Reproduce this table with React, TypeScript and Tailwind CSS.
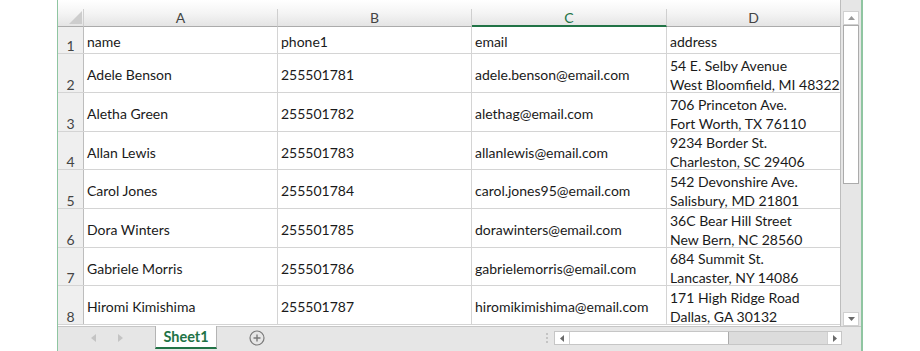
import React from 'react';

const rows = [
  { name: 'Adele Benson', phone: '255501781', email: 'adele.benson@email.com', a1: '54 E. Selby Avenue', a2: 'West Bloomfield, MI 48322', h: 'h-[39px]' },
  { name: 'Aletha Green', phone: '255501782', email: 'alethag@email.com', a1: '706 Princeton Ave.', a2: 'Fort Worth, TX 76110', h: 'h-[39px]' },
  { name: 'Allan Lewis', phone: '255501783', email: 'allanlewis@email.com', a1: '9234 Border St.', a2: 'Charleston, SC 29406', h: 'h-[38px]' },
  { name: 'Carol Jones', phone: '255501784', email: 'carol.jones95@email.com', a1: '542 Devonshire Ave.', a2: 'Salisbury, MD 21801', h: 'h-[39px]' },
  { name: 'Dora Winters', phone: '255501785', email: 'dorawinters@email.com', a1: '36C Bear Hill Street', a2: 'New Bern, NC 28560', h: 'h-[39px]' },
  { name: 'Gabriele Morris', phone: '255501786', email: 'gabrielemorris@email.com', a1: '684 Summit St.', a2: 'Lancaster, NY 14086', h: 'h-[38px]' },
  { name: 'Hiromi Kimishima', phone: '255501787', email: 'hiromikimishima@email.com', a1: '171 High Ridge Road', a2: 'Dallas, GA 30132', h: 'h-[39px]' },
];

const font = "font-['Lato','Open_Sans',sans-serif]";

/* ── Column header cell ─────────────────────────────────── */
const ColHead = ({ label, w, active }: { label: string; w: string; active?: boolean }) => (
  <div
    className={`${w} shrink-0 flex items-center justify-center border-r border-[#cfcfcf] text-[14px] ${
      active ? 'text-[#217346] border-b-2 border-b-[#217346]' : 'text-[#444] border-b border-b-[#ababab]'
    }`}
  >
    {label}
  </div>
);

const Cell = ({ w, children }: { w: string; children: React.ReactNode }) => (
  <div className={`${w} shrink-0 flex items-center pl-[3px] pt-[3px] border-r border-[#d4d4d4] text-[14px] text-[#1a1a1a] overflow-hidden whitespace-nowrap`}>
    {children}
  </div>
);

const RowNum = ({ n }: { n: number }) => (
  <div className="w-[26px] shrink-0 bg-[#efefef] border-r border-[#bdbdbd] flex items-end justify-center text-[14px] leading-[14px] text-[#444]">
    {n}
  </div>
);

export default function App() {
  return (
    <div className={`w-[920px] h-[351px] bg-white flex ${font}`}>
      <div className="w-[57px] shrink-0" />
      {/* ── Excel window ─────────────────────────────── */}
      <div className="w-[806px] h-[351px] flex flex-col border-l border-r-2 border-[#8fc5a1]">
        <div className="flex flex-1 min-h-0">
          {/* grid */}
          <div className="w-[783px] flex flex-col border-r border-[#bdbdbd] overflow-hidden">
            {/* header row */}
            <div className="h-[27px] flex pt-[9px] bg-gradient-to-b from-white via-[#f4f4f4] to-[#e3e3e3]">
              <div className="w-[26px] shrink-0 flex items-end justify-end pr-[1px] pb-[2px] border-r border-[#cfcfcf] border-b border-b-[#ababab]">
                <svg width="13" height="13" viewBox="0 0 13 13">
                  <polygon points="13,0 13,13 0,13" fill="#cdcdcd" />
                </svg>
              </div>
              <ColHead label="A" w="w-[194px]" />
              <ColHead label="B" w="w-[194px]" />
              <ColHead label="C" w="w-[195px]" active />
              <ColHead label="D" w="w-[174px]" />
            </div>
            {/* row 1 */}
            <div className="h-[27px] flex border-b border-[#d4d4d4]">
              <RowNum n={1} />
              <Cell w="w-[194px]">name</Cell>
              <Cell w="w-[194px]">phone1</Cell>
              <Cell w="w-[195px]">email</Cell>
              <Cell w="w-[174px]">address</Cell>
            </div>
            {rows.map((r, i) => (
              <div key={r.name} className={`${r.h} shrink-0 flex border-b border-[#d4d4d4]`}>
                <RowNum n={i + 2} />
                <Cell w="w-[194px]">{r.name}</Cell>
                <Cell w="w-[194px]">{r.phone}</Cell>
                <Cell w="w-[195px]">{r.email}</Cell>
                <div className="w-[174px] shrink-0 flex flex-col justify-center pl-[3px] pt-[3px] text-[14px] leading-[19px] text-[#1a1a1a] whitespace-nowrap overflow-hidden">
                  <span>{r.a1}</span>
                  <span>{r.a2}</span>
                </div>
              </div>
            ))}
          </div>
          {/* vertical scrollbar */}
          <div className="w-[20px] bg-[#e6e6e6] flex flex-col pt-[11px] pl-[2px]">
            <div className="w-[16px] h-[14px] bg-white border border-[#d0d0d0] flex items-center justify-center">
              <svg width="7" height="4" viewBox="0 0 7 4">
                <polygon points="3.5,0 7,4 0,4" fill="#9a9a9a" />
              </svg>
            </div>
            <div className="w-[16px] h-[159px] bg-white border border-[#ababab]" />
            <div className="flex-1" />
            <div className="w-[16px] h-[14px] bg-white border border-[#d0d0d0] flex items-center justify-center">
              <svg width="7" height="4" viewBox="0 0 7 4">
                <polygon points="0,0 7,0 3.5,4" fill="#6a6a6a" />
              </svg>
            </div>
          </div>
        </div>
        {/* ── Sheet tabs bar ─────────────────────────── */}
        <div className="h-[25px] shrink-0 bg-[#e6e6e6] border-t border-[#c6c6c6] flex items-start">
          <div className="w-[97px] flex items-center justify-center gap-[22px] h-[22px]">
            <svg width="5" height="8" viewBox="0 0 5 8">
              <polygon points="5,0 5,8 0,4" fill="#c4c4c4" />
            </svg>
            <svg width="5" height="8" viewBox="0 0 5 8">
              <polygon points="0,0 0,8 5,4" fill="#c4c4c4" />
            </svg>
          </div>
          <div className="w-[62px] h-[23px] -mt-px bg-white border-x border-[#b4b4b4] border-b-2 border-b-[#217346] flex items-center justify-center text-[14.5px] font-bold text-[#217346]">
            Sheet1
          </div>
          <div className="w-[80px] h-[22px] flex items-center justify-center">
            <svg width="16" height="16" viewBox="0 0 16 16">
              <circle cx="8" cy="8" r="7" fill="none" stroke="#7a7a7a" strokeWidth="1.2" />
              <path d="M8 4.5v7M4.5 8h7" stroke="#7a7a7a" strokeWidth="1.4" />
            </svg>
          </div>
          <div className="flex-1" />
          <div className="h-[22px] w-[14px] flex flex-col items-center justify-center gap-[2px]">
            <span className="w-[2px] h-[2px] bg-[#c4c4c4]" />
            <span className="w-[2px] h-[2px] bg-[#c4c4c4]" />
            <span className="w-[2px] h-[2px] bg-[#c4c4c4]" />
          </div>
          <div className="w-[288px] h-[14px] mt-[4px] mr-[19px] bg-[#dcdcdc] border border-[#c6c6c6] flex">
            <div className="w-[15px] h-full bg-white border-r border-[#d0d0d0] flex items-center justify-center">
              <svg width="4" height="7" viewBox="0 0 4 7">
                <polygon points="4,0 4,7 0,3.5" fill="#6a6a6a" />
              </svg>
            </div>
            <div className="w-[159px] h-full bg-white border-r border-[#ababab]" />
            <div className="flex-1" />
            <div className="w-[14px] h-full bg-white border-l border-[#d0d0d0] flex items-center justify-center">
              <svg width="4" height="7" viewBox="0 0 4 7">
                <polygon points="0,0 0,7 4,3.5" fill="#6a6a6a" />
              </svg>
            </div>
          </div>
        </div>
      </div>
    </div>
  );
}
